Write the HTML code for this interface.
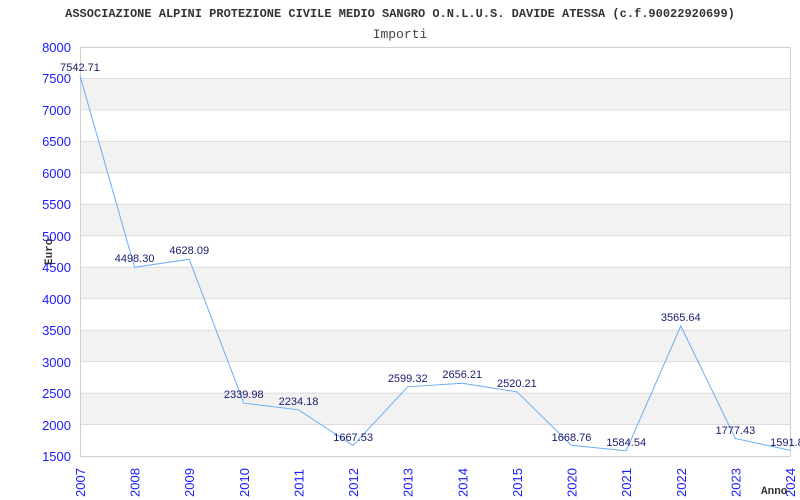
<!DOCTYPE html>
<html><head><meta charset="utf-8"><style>
html,body{margin:0;padding:0;background:#fff;width:800px;height:500px;overflow:hidden}
svg{display:block}
.y{font:13px "Liberation Sans",sans-serif;fill:#1a1aff;text-anchor:end}
.x{font:13px "Liberation Sans",sans-serif;fill:#1a1aff}
.v{font:11px "Liberation Sans",sans-serif;fill:#1a1a6e;text-anchor:middle}
.t{font:bold 12px "Liberation Mono",monospace;fill:#333;text-anchor:middle}
</style></head><body>
<svg width="800" height="500" xmlns="http://www.w3.org/2000/svg">
<text class="t" x="400" y="17">ASSOCIAZIONE ALPINI PROTEZIONE CIVILE MEDIO SANGRO O.N.L.U.S. DAVIDE ATESSA (c.f.90022920699)</text>
<text x="400" y="38" style="font:13px 'Liberation Mono',monospace;fill:#444;text-anchor:middle">Importi</text>
<g fill="#f2f2f2">
<rect x="80" y="78.5" width="710" height="31.5"/>
<rect x="80" y="141.4" width="710" height="31.5"/>
<rect x="80" y="204.3" width="710" height="31.5"/>
<rect x="80" y="267.2" width="710" height="31.5"/>
<rect x="80" y="330.2" width="710" height="31.5"/>
<rect x="80" y="393.1" width="710" height="31.5"/>
</g>
<g stroke="#dcdcdc" stroke-width="1">
<line x1="80" x2="790" y1="78.5" y2="78.5"/><line x1="80" x2="790" y1="110" y2="110"/>
<line x1="80" x2="790" y1="141.4" y2="141.4"/><line x1="80" x2="790" y1="172.9" y2="172.9"/>
<line x1="80" x2="790" y1="204.3" y2="204.3"/><line x1="80" x2="790" y1="235.8" y2="235.8"/>
<line x1="80" x2="790" y1="267.2" y2="267.2"/><line x1="80" x2="790" y1="298.7" y2="298.7"/>
<line x1="80" x2="790" y1="330.2" y2="330.2"/><line x1="80" x2="790" y1="361.6" y2="361.6"/>
<line x1="80" x2="790" y1="393.1" y2="393.1"/><line x1="80" x2="790" y1="424.5" y2="424.5"/>
</g>
<rect x="80.5" y="47.5" width="710" height="409" fill="none" stroke="#d0d0d0"/>
<g class="y">
<text x="71" y="52">8000</text><text x="71" y="83">7500</text><text x="71" y="115">7000</text>
<text x="71" y="146">6500</text><text x="71" y="178">6000</text><text x="71" y="209">5500</text>
<text x="71" y="241">5000</text><text x="71" y="272">4500</text><text x="71" y="304">4000</text>
<text x="71" y="335">3500</text><text x="71" y="367">3000</text><text x="71" y="398">2500</text>
<text x="71" y="430">2000</text><text x="71" y="461">1500</text>
</g>
<g class="x">
<text transform="translate(85,497) rotate(-90)">2007</text>
<text transform="translate(139.6,497) rotate(-90)">2008</text>
<text transform="translate(194.2,497) rotate(-90)">2009</text>
<text transform="translate(248.8,497) rotate(-90)">2010</text>
<text transform="translate(303.5,497) rotate(-90)">2011</text>
<text transform="translate(358.1,497) rotate(-90)">2012</text>
<text transform="translate(412.7,497) rotate(-90)">2013</text>
<text transform="translate(467.3,497) rotate(-90)">2014</text>
<text transform="translate(521.9,497) rotate(-90)">2015</text>
<text transform="translate(576.5,497) rotate(-90)">2020</text>
<text transform="translate(631.2,497) rotate(-90)">2021</text>
<text transform="translate(685.8,497) rotate(-90)">2022</text>
<text transform="translate(740.4,497) rotate(-90)">2023</text>
<text transform="translate(795,497) rotate(-90)">2024</text>
</g>
<polyline fill="none" stroke="#6aaef5" stroke-width="1" points="80,75.8 134.6,267.3 189.2,259.2 243.8,403.2 298.5,409.8 353.1,445.5 407.7,386.8 462.3,383.3 516.9,391.8 571.5,445.4 626.2,450.7 680.8,326 735.4,438.5 790,450.3"/>
<g class="v">
<text x="80" y="71">7542.71</text>
<text x="134.6" y="262">4498.30</text>
<text x="189.2" y="254">4628.09</text>
<text x="243.8" y="398">2339.98</text>
<text x="298.5" y="405">2234.18</text>
<text x="353.1" y="441">1667.53</text>
<text x="407.7" y="382">2599.32</text>
<text x="462.3" y="378">2656.21</text>
<text x="516.9" y="387">2520.21</text>
<text x="571.5" y="441">1668.76</text>
<text x="626.2" y="446">1584.54</text>
<text x="680.8" y="321">3565.64</text>
<text x="735.4" y="434">1777.43</text>
<text x="790" y="446">1591.85</text>
</g>
<text transform="translate(52,265) rotate(-90)" style="font:bold 11px 'Liberation Mono',monospace;fill:#333">Euro</text>
<text x="761" y="494" style="font:bold 11px 'Liberation Mono',monospace;fill:#333">Anno</text>
</svg>
</body></html>
